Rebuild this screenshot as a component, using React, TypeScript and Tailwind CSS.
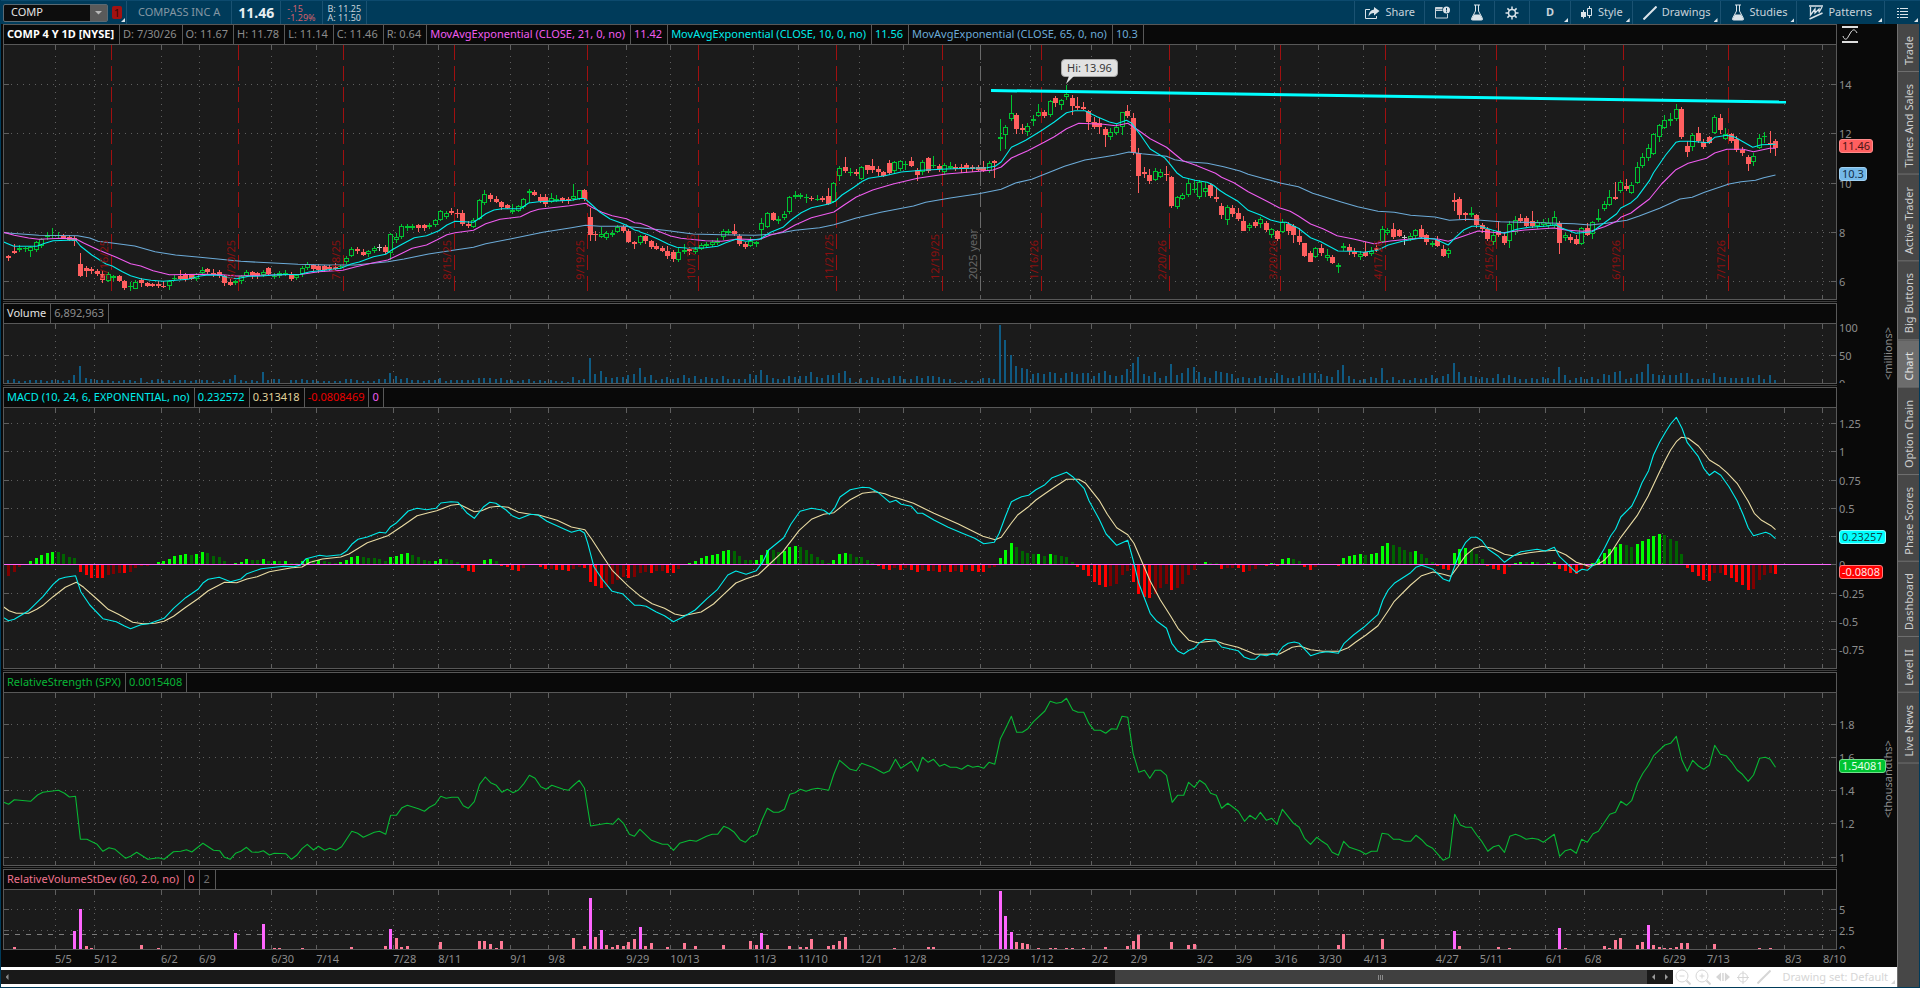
import React from 'react';

// Drawn values are kept in chart units: 2.45 per pixel across and 3 per pixel down,
// split in three pages of 640px each.
const PAGE = 640;
const PLOT_LEFT = 4;
const PLOT_WIDTH = 1832;

const pageX = (x: number, page: number) => x / 2.45 + PAGE * page - PLOT_LEFT;
const barX = (i: number) => Math.floor(8.5 + 5.54 * i) - PLOT_LEFT;
const nums = (s: string) => s.trim().split(/\s+/).map(Number);

const trace = (pages: string[], offset: number) =>
  pages
    .map((page, p) =>
      page
        .trim()
        .split(/\s+/)
        .map((pt) => {
          const [x, y] = pt.split(',').map(Number);
          return `${pageX(x, p).toFixed(1)},${(y / 3 + offset).toFixed(1)}`;
        })
        .join(' ')
    )
    .join(' ');

const candleData = `
r765,767,775,782 r733,754,758,763 g736,745,749,755 g740,744,748,755 g738,742,754,770 g723,725,750,755 g715,718,739,744 g695,706,712,720
g684,704,708,714 g697,704,708,714 r702,707,713,718 r705,711,721,724 r708,714,724,738 r759,792,828,831 r799,805,813,832 r802,808,814,823
r806,813,821,829 r812,823,841,849 g816,822,842,846 g824,829,835,842 r826,828,843,845 r840,844,863,870 g846,857,861,872 g841,847,866,868
r835,840,849,862 r846,849,858,862 r848,853,857,861 r843,853,858,863 r844,857,859,864 g841,843,857,869 g826,833,837,844 r810,829,836,840
r820,824,836,842 r821,823,837,840 g818,822,836,843 g801,809,820,823 r804,807,815,825 r807,820,824,830 r811,817,827,833 r825,828,850,857
r838,845,855,858 g840,842,850,856 g825,829,843,851 g811,815,828,832 r814,817,824,836 r815,820,827,836 g810,816,826,831 r800,803,823,828
g818,827,831,837 g813,820,829,834 g810,818,823,829 r815,823,838,842 g821,824,834,839 g797,803,823,831 g786,791,803,810 r791,795,808,812
r793,798,810,818 r794,797,810,815 r796,800,808,813 r790,801,806,811 g794,798,802,808 g767,774,787,792 g742,748,767,771 r742,746,754,762
r748,755,764,768 g750,754,762,770 g738,745,752,758 w732,742,745,752 r735,742,755,763 g700,702,760,779 g700,711,720,728 g672,679,712,716
g672,678,684,692 g671,678,684,690 r672,675,683,697 r671,676,685,694 g670,675,681,687 g658,661,675,681 g630,633,660,664 g633,640,652,657
r625,633,640,645 r627,638,641,655 r630,640,671,677 r663,671,678,685 g655,660,681,685 g596,600,657,660 g570,582,608,614 r580,585,597,605
r587,597,605,609 r604,606,621,630 r611,616,623,627 g612,629,635,641 g616,619,632,636 g594,598,620,626 g568,574,580,608 r569,577,585,589
r582,590,604,608 r583,592,612,620 g580,594,605,610 g584,597,602,605 r592,595,603,610 r592,597,604,611 g551,589,597,604 g569,571,596,600
r567,570,598,603 r625,651,704,722 r694,701,705,722 g680,703,712,714 g694,700,715,719 g691,699,706,710 g676,680,695,700 r675,682,694,700
r686,694,725,730 r723,727,732,746 g705,708,728,735 r706,708,724,732 r719,724,742,748 r730,737,748,751 r738,744,752,757 r738,752,769,776
r749,755,778,785 g745,757,779,785 g733,751,757,762 r742,746,752,766 g740,748,755,762 g730,736,746,750 g726,732,739,744 g720,727,735,740
g715,724,729,735 g687,693,712,720 g688,693,698,706 r672,692,702,708 r702,708,733,739 r727,732,740,747 g711,724,738,742 g722,727,731,741
g655,670,689,720 g637,640,680,685 r635,640,660,664 g649,656,662,672 g632,641,654,660 g588,591,637,641 g573,586,592,597 g578,586,592,597
g582,590,595,608 r587,593,597,602 g586,597,601,604 r589,595,599,605 r565,588,611,614 g547,549,605,610 g497,505,529,543 r471,502,514,519
g505,516,520,528 r508,515,522,528 g498,501,536,540 r494,495,509,521 r478,497,510,518 r499,507,517,527 r512,516,527,532 r480,489,518,524
g483,486,514,522 g480,483,507,512 g484,492,496,509 r471,484,497,502 r505,511,524,542 g481,485,517,525 r472,474,513,518 g469,494,498,505
r492,498,506,515 g490,495,517,524 g486,497,503,508 r492,500,507,512 r492,500,506,518 r490,496,506,518 r494,500,508,515 r495,500,509,514
r484,500,514,517 g482,488,513,518 r481,483,490,533 g358,412,417,453 g375,382,406,447 g285,340,358,364 r340,345,386,403 r372,384,391,402
g369,378,396,408 g345,358,364,379 g312,337,347,351 r331,336,347,355 g300,302,344,352 r289,294,310,322 g297,301,315,331 g256,282,290,299
r284,294,317,345 r291,318,323,330 r305,320,327,331 r331,334,365,389 r350,365,382,388 r354,369,382,402 r380,388,404,440 g385,396,412,420
g372,380,398,406 g336,337,382,406 r315,333,348,355 r340,355,460,466 r443,460,527,579 r502,517,521,533 r506,526,543,552 g503,513,541,544
g508,515,531,534 r497,521,525,543 r528,531,617,624 g588,591,620,627 g580,586,596,600 g537,549,584,592 g541,567,571,578 g540,545,591,598
g545,565,577,590 r549,556,587,594 r565,591,598,605 r609,618,646,658 g615,622,661,674 r615,624,642,650 r625,640,657,662 r649,663,692,694
g668,674,685,692 r660,666,678,685 g650,657,671,684 r663,669,691,696 g683,687,705,713 r690,692,716,722 g657,665,697,700 r667,672,693,706
r672,677,704,728 r683,708,726,736 r728,729,768,771 r752,758,786,787 g740,745,770,775 r732,745,759,767 g748,765,775,783 r765,770,788,791
g790,795,800,818 g730,738,744,752 r731,740,752,766 r745,757,763,771 g754,763,772,780 r727,757,767,770 g741,752,761,769 r734,744,751,755
g678,688,725,730 g685,689,699,704 r670,687,710,716 r688,691,707,712 w704,711,714,735 g700,708,716,722 g687,690,709,715 r675,688,711,714
r703,706,725,735 g722,729,734,740 r708,720,739,742 r734,746,767,771 g744,751,763,774 r579,599,606,632 r591,597,645,657 r637,640,646,664
g621,639,645,650 r641,645,675,684 r668,674,687,700 r681,687,717,724 g690,705,725,735 r664,694,705,711 r700,708,729,736 g664,672,722,743
g649,660,696,704 r643,655,663,670 r647,654,677,680 r633,663,679,684 g661,667,679,687 g658,667,676,681 g655,668,678,686 g633,651,678,685
r662,669,728,762 g699,706,713,722 r702,711,721,728 r706,718,731,735 g681,685,733,735 r669,684,705,708 g662,665,702,718 g626,655,660,665
g604,612,628,632 g570,591,614,618 r546,591,597,600 g541,547,572,579 r537,558,566,573 g545,556,580,583 g486,502,549,553 g458,471,497,504
g432,445,475,482 g398,401,461,464 g373,376,412,426 g345,361,385,388 g340,356,362,377 g312,328,357,363 r321,327,411,416 r423,438,455,471
g399,406,440,452 r380,399,424,430 r418,425,440,447 r407,411,428,432 g345,352,398,402 r342,353,389,402 g384,402,416,421 r398,402,423,430
r409,417,449,455 r442,449,459,467 r464,472,491,513 g460,469,486,497 g402,414,445,447 g397,408,412,428 r393,428,432,459 r418,424,444,468`;

const ema10 = [
  '9,726 22,733 34,739 90,739 110,730 130,722 185,720 197,738 225,765 260,792 275,798 300,815 320,827 345,836 370,841 400,844 430,841 460,838 490,828 510,825 540,826 560,833 580,836 610,829 640,828 680,824 735,823 760,815 800,810 835,805 860,792 880,786 915,770 945,763 960,750 985,733 1015,713 1045,707 1075,692 1095,675 1115,664 1160,667 1175,655 1190,641 1210,630 1230,626 1275,626 1295,609 1320,605 1400,601 1425,595 1433,596 1448,612 1470,637 1495,657 1520,668 1535,676 1555,690 1567,694',
  '0,696 20,704 45,718 70,733 90,742 120,745 160,743 190,739 210,728 235,718 260,724 295,716 320,697 350,682 370,660 395,638 420,623 465,611 480,602 495,585 525,561 545,544 560,535 600,527 640,516 690,511 750,507 850,503 870,499 885,486 910,442 945,421 985,391 1015,366 1045,338 1065,332 1090,332 1120,350 1150,366 1168,371 1192,361 1205,370 1225,403 1250,447 1285,473 1295,487 1315,518 1330,532 1360,541 1390,547 1405,556 1420,571 1435,583 1465,604 1490,631 1520,645 1545,660 1567,667',
  '0,667 15,667 45,685 75,713 100,725 142,753 180,754 205,757 240,750 265,735 300,724 345,714 380,717 412,735 430,712 450,690 470,679 490,679 520,690 550,700 580,688 610,682 655,678 675,674 690,684 725,700 765,695 795,668 825,641 835,624 860,608 875,592 905,542 915,518 945,465 970,427 980,424 1005,424 1050,428 1065,412 1095,406 1115,412 1158,442 1180,434 1214,433',
];

const ema21 = [
  '9,697 35,706 70,714 95,718 150,715 185,716 205,729 240,749 285,772 320,791 345,798 375,812 415,824 500,823 545,824 580,828 640,826 740,823 780,815 840,811 870,801 915,788 950,780 985,760 1010,745 1045,735 1070,720 1095,704 1115,698 1160,691 1190,671 1225,658 1275,650 1300,635 1320,628 1395,617 1435,610 1450,622 1475,637 1500,647 1535,656 1555,668 1567,670',
  '0,670 20,679 45,694 75,708 100,715 160,722 200,724 240,717 290,719 320,705 350,695 380,675 420,653 475,636 500,615 530,591 570,570 620,552 680,535 750,522 810,516 865,510 885,501 910,474 950,452 990,427 1015,410 1045,386 1075,370 1135,373 1165,377 1195,370 1220,390 1250,416 1290,442 1330,482 1360,495 1410,520 1425,532 1455,548 1490,575 1530,600 1567,624',
  '0,624 25,634 45,648 75,672 105,686 140,707 180,717 230,731 270,723 345,714 390,718 412,724 450,708 485,693 540,699 600,690 670,684 700,690 740,694 765,692 795,680 825,664 835,652 860,639 875,625 905,597 935,552 970,509 1000,490 1045,475 1065,459 1095,448 1135,448 1160,455 1200,445 1214,445',
];

const ema65 = [
  '9,698 95,706 190,707 220,714 240,724 270,728 330,738 380,755 430,765 490,772 590,784 730,793 800,795 870,795 950,785 990,777 1050,762 1110,751 1160,742 1190,731 1250,717 1330,697 1400,683 1435,676 1470,679 1530,679 1567,683',
  '0,683 60,691 130,702 200,704 280,706 330,702 380,691 440,683 475,674 530,654 590,637 670,618 700,607 760,594 830,581 885,568 920,549 960,538 1000,518 1040,499 1090,480 1140,470 1165,465 1198,456 1230,461 1290,469 1310,479 1340,485 1390,490 1430,500 1470,513 1490,523 1530,536 1567,548',
  '0,549 45,560 80,580 110,591 150,606 190,620 240,634 280,637 320,646 380,651 415,661 460,658 540,665 640,668 720,671 760,675 800,670 850,661 880,648 930,625 980,597 1010,592 1040,577 1100,552 1130,545 1165,541 1185,533 1214,525',
];

const macdLine = [
  '9,953 21,962 35,958 70,932 105,890 130,853 145,837 160,832 185,827 198,875 220,915 252,956 285,965 305,978 320,986 345,974 365,971 402,955 425,925 455,893 485,868 498,848 510,838 537,832 565,845 590,837 605,821 640,806 695,799 720,800 735,796 750,776 783,766 800,769 835,764 850,752 862,733 877,718 900,711 930,697 945,699 957,680 970,670 1000,633 1022,625 1045,629 1068,625 1080,609 1105,605 1122,607 1145,640 1162,655 1185,620 1200,607 1215,610 1240,630 1255,647 1272,656 1300,643 1318,645 1340,664 1375,683 1400,697 1420,690 1432,699 1440,730 1455,800 1475,837 1500,874 1525,881 1555,916 1567,916',
  '0,916 15,919 40,936 60,947 82,965 110,948 135,930 165,895 190,868 215,825 235,813 260,823 285,812 300,788 315,750 352,713 370,672 392,634 420,625 450,631 464,643 478,622 490,591 515,569 545,562 562,563 583,577 612,607 627,601 640,613 665,619 680,640 692,640 720,660 755,682 790,700 820,715 842,731 868,727 880,700 895,650 910,605 935,590 952,586 970,569 992,554 1010,533 1045,517 1060,530 1088,565 1100,602 1125,658 1142,702 1168,736 1195,721 1208,780 1222,850 1250,940 1265,962 1290,985 1303,1030 1318,1054 1332,1062 1345,1051 1358,1045 1370,1029 1385,1018 1410,1020 1425,1041 1465,1052 1480,1071 1495,1078 1507,1078 1520,1064 1535,1067 1550,1060 1561,1066 1567,1052',
  '0,1052 7,1040 20,1030 35,1026 47,1030 75,1067 95,1059 115,1055 143,1060 157,1030 180,1005 205,982 240,943 252,900 265,870 280,850 320,818 333,802 347,796 375,808 400,837 415,844 425,808 440,760 455,727 468,712 482,712 495,722 510,748 535,769 550,787 570,769 590,755 630,748 650,753 672,742 685,770 700,787 726,818 740,808 753,811 775,787 795,745 810,708 822,688 835,651 862,618 875,585 887,548 903,512 915,465 930,427 945,395 957,372 971,352 985,385 998,428 1025,470 1038,505 1052,526 1065,514 1080,526 1100,560 1120,602 1135,645 1147,683 1160,707 1190,697 1202,703 1214,716',
];

const signalLine = [
  '9,921 22,932 40,940 70,940 90,928 105,916 130,890 160,862 187,847 205,862 240,900 265,928 290,943 325,967 350,971 380,970 402,964 425,949 455,922 485,896 510,872 550,847 580,848 605,837 630,830 660,815 715,803 740,801 760,787 790,777 835,771 855,762 900,728 950,707 985,679 1022,647 1050,638 1070,632 1105,616 1125,613 1145,625 1162,635 1180,632 1200,622 1220,619 1245,622 1270,637 1300,643 1320,645 1365,661 1400,681 1433,689 1450,718 1475,765 1500,811 1540,859 1567,887',
  '0,888 30,911 60,925 85,942 105,947 150,936 180,912 205,883 235,849 260,836 290,824 315,795 350,755 390,691 420,658 450,643 475,638 500,613 515,599 545,580 575,575 600,581 615,589 640,598 670,610 720,640 780,672 840,709 870,719 885,712 910,669 925,645 950,622 970,600 990,583 1015,562 1045,538 1075,538 1092,550 1125,601 1145,643 1168,683 1195,704 1210,730 1235,800 1250,843 1275,900 1300,948 1318,985 1345,1021 1365,1028 1410,1022 1430,1031 1465,1042 1507,1063 1567,1062',
  '0,1061 30,1042 48,1038 75,1049 105,1054 145,1054 167,1043 185,1027 210,1006 240,977 265,932 280,904 320,855 347,827 375,816 400,823 418,829 435,801 455,766 475,745 495,739 520,745 550,763 570,767 610,758 640,754 675,751 700,764 726,787 757,799 780,792 795,780 810,760 835,712 875,647 902,588 930,515 945,478 957,450 971,425 983,412 1000,415 1025,438 1052,480 1075,497 1095,518 1120,550 1147,604 1162,640 1180,661 1203,677 1214,689',
];

const macdDiff = nums(`
-32 -20 -7 0 10 19 28 34 37 36 31 22 19 -20 -31 -38 -39 -40 -31 -26 -23 -24 -20 -10 -3 -2 0 7 10 16 25 28
31 28 31 35 34 25 22 10 1 4 7 16 13 12 16 10 10 9 10 3 2 10 16 11 13 8 7 4 7 13 22 25
22 19 18 16 10 22 23 31 32 28 22 13 9 10 16 15 13 7 -8 -19 -20 0 13 14 9 -2 -7 -16 -17 -9 -1 0
-7 -13 -12 -14 -16 -19 -12 -7 -10 -50 -64 -70 -67 -58 -44 -36 -38 -36 -25 -22 -23 -19 -18 -23 -24 -13 -1 4 10 19 25 28
31 40 43 40 25 13 12 13 28 43 42 36 40 52 55 52 43 31 22 13 3 13 31 34 31 22 21 13 4 -4 -13 -16
-10 -14 -10 -14 -22 -16 -19 -18 -20 -18 -20 -18 -20 -16 -19 -20 -21 -10 -7 19 43 64 52 40 34 30 31 25 31 28 25 22
7 -7 -16 -34 -52 -61 -67 -64 -56 -31 -19 -52 -86 -97 -100 -88 -70 -58 -76 -70 -56 -31 -16 0 7 3 2 -13 -10 -9 -10 -22
-19 -13 -1 -2 4 -3 16 19 16 10 -7 -16 -7 -1 0 -1 -2 19 25 28 29 28 31 34 55 64 58 52 43 37 38 31
19 7 -2 -13 -14 34 46 49 46 31 16 -4 -13 -16 -26 -7 4 7 6 7 6 0 4 7 -13 -19 -25 -28 -16 -13 4 16
34 46 50 61 58 52 61 70 76 85 91 88 76 70 31 -10 -22 -34 -46 -49 -25 -24 -31 -40 -52 -61 -76 -73 -46 -31 -25 -26`);

const volume = nums(`
9 12 6 6 9 9 9 6 9 9 6 9 24 51 15 12 9 9 9 6 6 9 9 6 15 3 9 12 6 9 6 9
9 6 9 9 9 6 3 9 12 24 9 6 9 6 33 9 12 12 0 9 9 12 9 9 6 6 6 6 6 12 12 9
6 6 6 12 12 30 21 12 15 9 9 6 9 9 15 6 9 9 9 9 9 15 15 15 12 15 9 9 6 9 12 6
9 6 9 6 6 3 18 9 12 75 27 36 18 15 18 18 24 27 45 18 24 9 12 18 12 15 24 15 21 12 18 15
12 21 12 12 12 12 27 24 39 24 15 12 12 21 18 21 21 33 18 15 24 24 30 36 15 3 15 9 18 15 9 15
21 21 12 12 21 15 21 21 18 12 12 3 3 9 6 6 15 15 12 174 129 84 51 45 42 27 30 27 33 30 15 30
33 27 30 30 21 30 36 24 21 24 42 60 78 27 21 33 15 21 57 24 30 45 48 33 18 15 36 33 30 27 15 18
15 15 21 15 15 30 24 15 15 21 30 30 30 27 21 18 39 54 21 12 9 12 18 15 45 9 18 9 12 9 15 12
15 24 15 21 27 60 33 18 21 18 18 15 15 27 15 24 18 12 12 15 12 18 15 12 48 24 9 15 18 12 18 12
27 24 33 36 12 15 27 33 57 27 24 24 24 24 30 30 12 12 15 12 30 18 18 15 15 15 18 15 24 12 24 9`);

const strengthLine = [
  '9,427 21,433 35,419 75,424 92,405 105,397 143,391 158,400 170,411 185,409 197,538 213,538 238,553 252,574 267,563 282,568 308,595 320,589 335,577 362,598 388,593 402,598 425,575 443,574 457,569 470,576 497,550 523,571 538,572 550,592 564,598 577,580 590,574 604,562 617,576 633,577 645,572 660,585 672,580 700,581 714,598 727,586 740,566 753,553 768,570 780,559 795,571 808,565 823,571 837,560 862,514 876,520 890,532 917,517 930,514 945,523 957,466 971,466 985,443 998,436 1025,446 1040,454 1052,442 1066,433 1080,409 1093,415 1107,412 1122,412 1135,437 1147,445 1162,425 1175,373 1189,351 1202,368 1216,376 1230,397 1243,388 1257,398 1270,390 1284,370 1297,346 1311,355 1325,380 1338,388 1352,376 1380,388 1392,391 1406,375 1419,361 1432,385 1447,498 1487,490 1501,493 1515,475 1528,491 1542,523 1554,529 1567,509',
  '0,508 28,541 55,553 68,553 82,571 97,550 122,541 138,544 163,529 177,523 190,523 205,499 217,505 231,517 245,539 258,547 272,530 286,523 299,480 312,445 327,457 340,457 354,448 367,403 380,398 393,388 407,394 421,388 435,385 462,391 475,342 489,301 515,328 530,332 543,310 570,322 597,340 611,332 626,298 639,325 665,304 680,334 692,292 706,307 719,298 734,319 746,313 760,322 775,322 788,328 803,316 815,322 828,319 842,325 855,307 869,313 883,236 896,205 910,169 923,217 937,217 950,206 964,185 992,153 1005,124 1020,130 1033,127 1045,115 1060,150 1073,157 1087,157 1100,191 1113,211 1128,211 1141,220 1155,206 1168,208 1181,169 1195,172 1208,280 1222,337 1236,331 1249,355 1262,331 1276,331 1290,346 1304,427 1317,406 1332,406 1344,367 1358,382 1371,361 1385,373 1398,400 1412,406 1425,445 1440,430 1466,454 1481,484 1494,466 1508,478 1520,457 1535,481 1548,475 1561,493 1567,468',
  '0,468 6,448 20,470 33,490 47,502 60,535 75,553 90,532 102,543 116,554 128,577 143,586 156,544 170,562 197,573 210,583 224,574 238,574 250,520 265,523 278,538 292,538 305,544 320,544 333,526 347,539 360,556 374,565 400,601 415,592 428,463 442,495 455,502 469,502 482,525 495,545 509,574 523,560 536,556 550,577 563,529 577,523 590,529 603,538 618,535 632,538 645,547 672,523 685,589 699,572 712,568 726,580 739,538 753,547 767,521 780,514 808,463 822,457 835,424 849,436 862,421 876,370 889,340 903,316 916,286 943,255 957,250 971,229 985,301 998,334 1011,301 1025,318 1038,328 1052,316 1065,256 1079,283 1093,287 1107,307 1120,330 1133,343 1147,364 1160,345 1175,295 1189,292 1201,298 1214,322',
];

// bar index, height
const relVolume = `
1,5 12,54 13,120 14,9 15,3 24,12 27,3 41,48 46,75 48,3 49,3 53,3 62,6 68,9 69,60 70,33 71,6 72,9 78,21 85,24 86,24 87,15 88,3 89,24
102,33 104,9 105,153 106,36 107,57 108,12 109,6 110,12 111,9 112,21 113,30 114,66 115,9 116,18 119,6 122,18 124,9 129,12 134,24 135,12
136,48 137,12 141,9 143,6 144,6 145,30 148,9 149,12 150,24 151,36 160,3 166,6 167,6 179,174 180,99 181,51 182,21 183,18 184,15 186,3
188,3 189,3 191,3 192,3 194,3 198,6 202,9 203,24 204,42 210,21 213,12 214,15 240,12 241,45 248,30 261,54 262,9 269,6 271,3 280,63 281,3
288,9 289,3 290,27 291,33 294,12 295,21 296,72 297,12 298,6 299,3 300,3 301,6 302,18 303,18 308,15 316,3 318,3`
  .trim()
  .split(/\s+/)
  .map((s) => s.split(',').map(Number));

const dates: [string, number][] = [
  ['5/5', 55], ['5/12', 94], ['6/2', 161], ['6/9', 199], ['6/30', 271], ['7/14', 316], ['7/28', 393], ['8/11', 438],
  ['9/1', 510], ['9/8', 548], ['9/29', 626], ['10/13', 670], ['11/3', 753], ['11/10', 798], ['12/1', 859], ['12/8', 903],
  ['12/29', 980], ['1/12', 1030], ['2/2', 1091], ['2/9', 1130], ['3/2', 1196], ['3/9', 1235], ['3/16', 1274], ['3/30', 1318],
  ['4/13', 1363], ['4/27', 1435], ['5/11', 1479], ['6/1', 1545], ['6/8', 1584], ['6/29', 1662], ['7/13', 1706], ['8/3', 1784],
  ['8/10', 1822],
];

const expirations: [string, number][] = [
  ['5/16/25', 111], ['6/20/25', 238], ['7/18/25', 343], ['8/15/25', 454], ['9/19/25', 587], ['10/17/25', 698],
  ['11/21/25', 836], ['12/19/25', 942], ['1/16/26', 1041], ['2/20/26', 1169], ['3/20/26', 1280], ['4/17/26', 1385],
  ['5/15/26', 1496], ['6/19/26', 1623], ['7/17/26', 1728],
];
const YEAR_X = 980;

const pct = (v: number, total: number) => `${(v / total) * 100}%`;

interface Cell {
  text: string;
  className: string;
}

interface AxisLabel {
  text: string;
  y: number;
}

interface AxisBadge extends AxisLabel {
  className: string;
}

interface PanelProps {
  cells: Cell[];
  cellPadding?: string;
  height: number;
  grid: number[];
  labels: AxisLabel[];
  badges?: AxisBadge[];
  unit?: string;
  corner?: React.ReactNode;
  overlay?: React.ReactNode;
  last?: boolean;
  children: React.ReactNode;
}

const Grid: React.FC<{ height: number; grid: number[] }> = ({ height, grid }) => (
  <g stroke="#5f5f5f" shapeRendering="crispEdges">
    {dates.map(([name, x]) => (
      <g key={name}>
        <path d={`M${x - 3.5} 11V${height - 7}`} strokeDasharray="1 5" />
        <path d={`M${x - 3.5} 0V5M${x - 3.5} ${height - 4}V${height}`} />
      </g>
    ))}
    {grid.map((y) => (
      <g key={y}>
        <path d={`M7 ${y + 0.5}H${PLOT_WIDTH - 6}`} strokeDasharray="1 5" />
        <path d={`M0 ${y + 0.5}H5M${PLOT_WIDTH - 5} ${y + 0.5}H${PLOT_WIDTH}`} />
      </g>
    ))}
  </g>
);

const Panel: React.FC<PanelProps> = ({
  cells,
  cellPadding = 'pl-[3px] pr-1',
  height,
  grid,
  labels,
  badges = [],
  unit,
  corner,
  overlay,
  last,
  children,
}) => (
  <section className="flex min-h-0">
    <div className="flex min-w-0 flex-1 flex-col">
      <div className="flex min-h-0 flex-1 flex-col border border-[#585858]">
        <header className="flex h-5 shrink-0 overflow-hidden whitespace-nowrap border-b border-[#585858] bg-[#090909]">
          {cells.map((cell) => (
            <span
              key={cell.text}
              className={`border-r border-[#585858] leading-[18px] ${cellPadding} ${cell.className}`}
            >
              {cell.text}
            </span>
          ))}
        </header>
        <div className="relative min-h-0 flex-1 overflow-hidden bg-[#1b1b1b]">
          <svg
            className="absolute inset-0 h-full w-full"
            viewBox={`0 0 ${PLOT_WIDTH} ${height}`}
            preserveAspectRatio="none"
            aria-hidden="true"
          >
            <Grid height={height} grid={grid} />
            {children}
          </svg>
          {overlay}
        </div>
      </div>
      {!last && <div className="my-px h-px shrink-0 bg-[#3c3c3c]" />}
    </div>
    <aside className={`relative flex w-[60px] shrink-0 flex-col pt-[21px] ${last ? 'pb-px' : 'pb-1'}`}>
      {corner}
      <div className="relative min-h-0 flex-1 overflow-hidden text-[#8c8c8c]">
        {labels.map((label) => (
          <span
            key={label.text}
            className="absolute left-[2px] -translate-y-1/2 leading-4"
            style={{ top: pct(label.y + 1, height) }}
          >
            {label.text}
          </span>
        ))}
        {unit && (
          <span className="absolute right-px top-0 flex h-full w-4 rotate-180 items-center justify-center leading-4 [writing-mode:vertical-rl]">
            {unit}
          </span>
        )}
        {badges.map((badge) => (
          <span
            key={badge.text}
            className={`absolute left-[2px] -translate-y-1/2 rounded-[3px] border px-[2px] leading-3 ${badge.className}`}
            style={{ top: pct(badge.y, height) }}
          >
            {badge.text}
          </span>
        ))}
      </div>
    </aside>
  </section>
);

const Candles: React.FC = () => (
  <g shapeRendering="crispEdges">
    {candleData
      .trim()
      .split(/\s+/)
      .map((entry, i) => {
        const kind = entry[0];
        const [high, top, bottom, low] = entry.slice(1).split(',').map((v) => Math.round(Number(v) / 3) - 45);
        const x = barX(i);
        const h = Math.max(bottom - top, 1);
        const color = kind === 'g' ? '#00c432' : kind === 'r' ? '#ff5f5f' : '#c8c8c8';
        return (
          <g key={i}>
            <rect x={x} y={high} width={1} height={Math.max(low - high, 1)} fill={color} />
            {kind === 'g' && h > 2 ? (
              <rect x={x - 1.5} y={top + 0.5} width={4} height={h - 1} fill="#1b1b1b" stroke={color} />
            ) : (
              <rect x={x - 2} y={top} width={5} height={h} fill={color} />
            )}
          </g>
        );
      })}
  </g>
);

const Line: React.FC<{ pages: string[]; offset: number; color: string }> = ({ pages, offset, color }) => (
  <polyline points={trace(pages, offset)} fill="none" stroke={color} strokeWidth={1.1} strokeLinejoin="round" />
);

const histColor = (v: number, prev: number) => {
  if (v >= 0) return v >= prev ? '#00ff00' : '#006400';
  return v < prev ? '#ff0000' : '#7f0000';
};

const Corner = () => (
  <svg className="absolute left-[5px] top-[2px]" width="16" height="17" viewBox="0 0 16 17" fill="none" aria-hidden="true">
    <path d="M0 1h16M0 16h16" stroke="#ddd" strokeWidth="2" />
    <path d="M1 10c1 4 4 4 5 1l3-5c2-3 4-3 6 1" stroke="#ddd" />
  </svg>
);

const ShareIcon = () => (
  <svg width="15" height="14" viewBox="0 0 15 14" fill="none" aria-hidden="true">
    <path d="M5 3.500H.500v9h11V10" stroke="#dbe4ea" />
    <path d="M9 1l5.500 4L9 9.500V7C6.500 7 5 8 3.500 10.500 3.700 6.500 5.500 4 9 3.500z" fill="#dbe4ea" />
  </svg>
);

const WindowAlertIcon = () => (
  <svg width="15" height="13" viewBox="0 0 15 13" fill="none" aria-hidden="true">
    <path d="M7.500 1.500H.500v10.500h12V8M.500 4.500h7" stroke="#c8d3da" />
    <path d="M.500 1.500h7v2h-7z" fill="#c8d3da" />
    <circle cx="11.500" cy="4" r="3.500" fill="#dbe4ea" />
    <path d="M11.500 2v2.500M11.500 5.200v1" stroke="#003b5a" />
  </svg>
);

const FlaskIcon = () => (
  <svg width="14" height="17" viewBox="0 0 14 17" fill="none" aria-hidden="true">
    <path d="M4 1h6M5.500 1v6L1.500 14.500q-.5 1.500 1 1.500h9q1.500 0 1-1.500L8.500 7V1" stroke="#dbe4ea" />
    <path d="M4 10.500h6l2.500 4.500-1 1h-9l-1-1z" fill="#dbe4ea" />
  </svg>
);

const GearIcon = () => (
  <svg width="14" height="14" viewBox="0 0 14 14" fill="none" aria-hidden="true">
    <circle cx="7" cy="7" r="3.500" stroke="#dbe4ea" strokeWidth="1.500" />
    <path d="M7 .500v3M7 10.500v3M.500 7h3M10.500 7h3M2.400 2.400l2 2M9.600 9.600l2 2M2.400 11.600l2-2M9.600 4.400l2-2" stroke="#dbe4ea" strokeWidth="1.500" />
  </svg>
);

const CandleIcon = () => (
  <svg width="12" height="13" viewBox="0 0 12 13" fill="none" aria-hidden="true">
    <path d="M2.500 4v8.500M8.500 0v2.500M8.500 9.500V12" stroke="#dbe4ea" />
    <path d="M0 6h5v5H0z" fill="#dbe4ea" />
    <path d="M6.500 2.500h4v7h-4z" stroke="#dbe4ea" />
  </svg>
);

const SlashIcon = ({ color = '#dbe4ea' }) => (
  <svg width="14" height="14" viewBox="0 0 14 14" aria-hidden="true">
    <path d="M.500 13.500l13-13" stroke={color} strokeWidth="2" />
  </svg>
);

const PatternIcon = () => (
  <svg width="14" height="15" viewBox="0 0 14 15" fill="none" aria-hidden="true">
    <path d="M0 1h14M.500 14L13.500 8" stroke="#dbe4ea" strokeWidth="1.500" />
    <path d="M1.500 2v8L6 4v4l4-4v3.500l3-5.500" stroke="#dbe4ea" strokeWidth="1.300" />
  </svg>
);

const MenuIcon = () => (
  <svg width="11" height="12" viewBox="0 0 11 12" stroke="#dbe4ea" aria-hidden="true">
    <path d="M0 1.500h2M3 1.500h8M0 4.500h2M3 4.500h8M0 7.500h2M3 7.500h8M0 10.500h2M3 10.500h8" />
  </svg>
);

interface ToolButtonProps {
  label: string;
  icon?: React.ReactNode;
  text?: string;
  menu?: boolean;
  className?: string;
}

const ToolButton: React.FC<ToolButtonProps> = ({ label, icon, text, menu, className = 'pl-[10px] pr-[9px]' }) => (
  <button
    type="button"
    aria-label={label}
    className={`relative flex h-full items-center justify-center gap-[5px] border-l border-[#1a5272] ${className}`}
  >
    {icon}
    {text && <span>{text}</span>}
    {menu && (
      <span className="absolute bottom-[2px] right-[2px] h-1 w-1 bg-[#dbe4ea] [clip-path:polygon(100%_0,100%_100%,0_100%)]" />
    )}
  </button>
);

const Toolbar = () => (
  <div className="flex h-6 shrink-0 items-center border-t border-[#0c4a6e] bg-[#003b5a] text-[#c8d3da]">
    <div className="ml-[2px] flex h-[18px] w-[105px] rounded-[2px] border border-[#5a6a74] bg-[#0d0d0d]">
      <input
        aria-label="Symbol"
        defaultValue="COMP"
        className="w-0 flex-1 bg-transparent pl-[7px] text-[11px] text-[#e4e4e4] outline-none"
      />
      <button type="button" aria-label="Symbol list" className="flex w-[17px] items-center justify-center bg-[#5a5a5a]">
        <span className="h-1 w-2 bg-[#b8b8b8] [clip-path:polygon(0_0,100%_0,50%_100%)]" />
      </button>
    </div>
    <button type="button" className="relative ml-1 mr-px flex h-full w-[13px] items-center">
      <span className="h-[13px] w-[10px] rounded-[2px] bg-[#a31212] text-center leading-[13px] text-[#3a0808]">1</span>
      <span className="absolute bottom-[2px] right-0 h-1 w-1 bg-[#dbe4ea] [clip-path:polygon(100%_0,100%_100%,0_100%)]" />
    </button>
    <div className="flex h-full items-center border-l border-r border-[#1a5272] px-[11px] text-[#8497a3]">COMPASS INC A</div>
    <div className="flex h-full items-center border-r border-[#1a5272] px-[6px] text-sm font-bold text-[#e6edf1]">11.46</div>
    <div className="flex h-full flex-col justify-center border-r border-[#1a5272] px-[6px] text-[9px] leading-[9px] text-[#d4616b]">
      <span>-.15</span>
      <span>-1.29%</span>
    </div>
    <div className="flex h-full flex-col justify-center border-r border-[#1a5272] px-[5px] text-[9px] leading-[9px]">
      <span>B: 11.25</span>
      <span>A: 11.50</span>
    </div>
    <div className="ml-auto flex h-full">
      <ToolButton label="Share" icon={<ShareIcon />} text="Share" />
      <ToolButton label="Alerts" icon={<WindowAlertIcon />} className="w-[35px]" />
      <ToolButton label="Studies" icon={<FlaskIcon />} className="w-[35px]" />
      <ToolButton label="Settings" icon={<GearIcon />} className="w-[35px]" />
      <ToolButton label="Aggregation" text="D" menu className="w-[41px] font-bold" />
      <ToolButton label="Style" icon={<CandleIcon />} text="Style" menu />
      <ToolButton label="Drawings" icon={<SlashIcon />} text="Drawings" menu />
      <ToolButton label="Edit studies" icon={<FlaskIcon />} text="Studies" menu />
      <ToolButton label="Patterns" icon={<PatternIcon />} text="Patterns" menu className="px-3" />
      <ToolButton label="Menu" icon={<MenuIcon />} menu className="w-9" />
    </div>
  </div>
);

const tabs = [
  'Trade', 'Times And Sales', 'Active Trader', 'Big Buttons', 'Chart', 'Option Chain', 'Phase Scores', 'Dashboard',
  'Level II', 'Live News',
];

const SideTabs = () => (
  <nav className="flex w-[22px] shrink-0 flex-col border-l border-[#707070] bg-[#474747] text-[#cfcfcf]">
    {tabs.map((tab) => (
      <button
        key={tab}
        type="button"
        className={`flex rotate-180 items-center border-t border-[#707070] pb-3 pt-[6px] leading-5 [writing-mode:vertical-rl] ${
          tab === 'Chart' ? 'bg-[#6c6c6c] text-[#e4e4e4]' : ''
        }`}
      >
        {tab}
      </button>
    ))}
  </nav>
);

const priceCells: Cell[] = [
  { text: 'COMP 4 Y 1D [NYSE]', className: 'font-bold text-white' },
  { text: 'D: 7/30/26', className: 'text-[#8c8c8c]' },
  { text: 'O: 11.67', className: 'text-[#8c8c8c]' },
  { text: 'H: 11.78', className: 'text-[#8c8c8c]' },
  { text: 'L: 11.14', className: 'text-[#8c8c8c]' },
  { text: 'C: 11.46', className: 'text-[#8c8c8c]' },
  { text: 'R: 0.64', className: 'text-[#8c8c8c]' },
  { text: 'MovAvgExponential (CLOSE, 21, 0, no)', className: 'text-[#f05cf0]' },
  { text: '11.42', className: 'text-[#f05cf0]' },
  { text: 'MovAvgExponential (CLOSE, 10, 0, no)', className: 'text-[#00ecec]' },
  { text: '11.56', className: 'text-[#00ecec]' },
  { text: 'MovAvgExponential (CLOSE, 65, 0, no)', className: 'text-[#6cabd8]' },
  { text: '10.3', className: 'text-[#6cabd8]' },
];

const ChartNotes = () => (
  <>
    {expirations.map(([name, x]) => (
      <span
        key={name}
        className="absolute bottom-[19px] -ml-[14px] rotate-180 leading-[14px] text-[#8a1010] [writing-mode:vertical-rl]"
        style={{ left: pct(x - PLOT_LEFT, PLOT_WIDTH) }}
      >
        {name}
      </span>
    ))}
    <span
      className="absolute bottom-[19px] -ml-[14px] rotate-180 leading-[14px] text-[#666] [writing-mode:vertical-rl]"
      style={{ left: pct(YEAR_X - PLOT_LEFT, PLOT_WIDTH) }}
    >
      2025 year
    </span>
    <div className="absolute top-[14px]" style={{ left: pct(1061 - PLOT_LEFT, PLOT_WIDTH) }}>
      <div className="rounded-[4px] border border-[#a8a8a8] bg-[#e2e2e2] px-[5px] leading-4 text-[#383838]">Hi: 13.96</div>
      <svg className="absolute left-1 top-[17px]" width="10" height="9" viewBox="0 0 10 9" aria-hidden="true">
        <path d="M4 0h5L1 8z" fill="#e2e2e2" />
      </svg>
    </div>
  </>
);

const Footer = () => (
  <div className="flex h-5 shrink-0 bg-white text-[#d6d6d6]">
    <div className="my-[3px] flex flex-1 bg-[#191919]">
      <button type="button" aria-label="Scroll to start" className="flex w-3 items-center justify-center">
        <span className="h-[6px] w-[3px] bg-[#8a8a8a] [clip-path:polygon(100%_0,100%_100%,0_50%)]" />
      </button>
      <div className="grow-[1103]" />
      <div className="flex grow-[528] items-center justify-center gap-px bg-[#404040]">
        <span className="h-[5px] w-px bg-[#8a8a8a]" />
        <span className="h-[5px] w-px bg-[#8a8a8a]" />
        <span className="h-[5px] w-px bg-[#8a8a8a]" />
      </div>
      <button type="button" aria-label="Scroll left" className="flex w-[13px] items-center justify-center">
        <span className="h-[6px] w-[3px] bg-[#9a9a9a] [clip-path:polygon(100%_0,100%_100%,0_50%)]" />
      </button>
      <button type="button" aria-label="Scroll right" className="flex w-[13px] items-center justify-center">
        <span className="h-[6px] w-[3px] bg-[#9a9a9a] [clip-path:polygon(0_0,0_100%,100%_50%)]" />
      </button>
    </div>
    <div className="relative flex w-[224px] items-center gap-1 pl-[2px]">
      <button type="button" aria-label="Zoom out">
        <svg width="16" height="16" viewBox="0 0 16 16" fill="none" stroke="#d6d6d6" aria-hidden="true">
          <circle cx="7" cy="7" r="6" />
          <path d="M4.500 7h5" />
          <path d="M11.500 11.500l4 4" strokeWidth="2" />
        </svg>
      </button>
      <button type="button" aria-label="Zoom in">
        <svg width="16" height="16" viewBox="0 0 16 16" fill="none" stroke="#d6d6d6" aria-hidden="true">
          <circle cx="7" cy="7" r="6" />
          <path d="M4.500 7h5M7 4.500v5" />
          <path d="M11.500 11.500l4 4" strokeWidth="2" />
        </svg>
      </button>
      <button type="button" aria-label="Fit width">
        <svg width="16" height="16" viewBox="0 0 16 16" fill="#d6d6d6" aria-hidden="true">
          <path d="M6 3.500v9L1 8zM10 3.500v9L15 8zM7 4h.800v8H7zM8.300 4h.800v8h-.8z" />
        </svg>
      </button>
      <button type="button" aria-label="Crosshair">
        <svg width="16" height="16" viewBox="0 0 16 16" fill="none" stroke="#d6d6d6" aria-hidden="true">
          <circle cx="8" cy="8.500" r="4.500" />
          <path d="M8 2v13M2 8.500h12" />
        </svg>
      </button>
      <button type="button" aria-label="Draw line" className="pl-[2px]">
        <SlashIcon color="#d6d6d6" />
      </button>
      <button type="button" className="ml-auto whitespace-nowrap pr-[9px] leading-4">
        Drawing set: Default
      </button>
      <span className="absolute bottom-[3px] right-[2px] h-1 w-1 bg-[#d6d6d6] [clip-path:polygon(100%_0,100%_100%,0_100%)]" />
    </div>
  </div>
);

export default function App() {
  return (
    <div className="flex h-screen min-h-[640px] flex-col overflow-hidden border-b border-l border-[#003b5a] bg-[#090909] font-['Noto_Sans','Open_Sans',sans-serif] text-[11px]">
      <Toolbar />
      <div className="flex min-h-0 flex-1 border-r border-[#003b5a]">
        <div className="flex min-w-0 flex-1 flex-col">
          <main className="grid min-h-0 flex-1 grid-rows-[279fr_84fr_285fr_197fr_81fr] pl-[2px]">
            <Panel
              cells={priceCells}
              cellPadding="pl-[3px] pr-[5px]"
              height={254}
              grid={[39, 88, 138, 187, 236]}
              labels={[
                { text: '14', y: 39 },
                { text: '12', y: 88 },
                { text: '10', y: 138 },
                { text: '8', y: 187 },
                { text: '6', y: 236 },
              ]}
              badges={[
                { text: '11.46', y: 101, className: 'border-[#ff8a8a] bg-[#ff5f5f] text-[#4a1515]' },
                { text: '10.3', y: 129, className: 'border-[#9fd0f2] bg-[#74b9e8] text-[#123048]' },
              ]}
              corner={<Corner />}
              overlay={<ChartNotes />}
            >
              <g shapeRendering="crispEdges">
                {expirations.map(([name, x]) => (
                  <path key={name} d={`M${x - 3.5} 0V248`} stroke="#a01010" strokeDasharray="15 6" />
                ))}
                <path d={`M${YEAR_X - 3.5} 0V248`} stroke="#6a6a6a" strokeDasharray="15 6" />
              </g>
              <Candles />
              <Line pages={ema65} offset={-45} color="#6cabd8" />
              <Line pages={ema21} offset={-45} color="#f05cf0" />
              <Line pages={ema10} offset={-45} color="#00ecec" />
              <path d="M987 45.500L1782 57" stroke="#00ffff" strokeWidth="3" />
            </Panel>

            <Panel
              cells={[
                { text: 'Volume', className: 'text-[#e4e4e4]' },
                { text: '6,892,963', className: 'text-[#8c8c8c]' },
              ]}
              height={59}
              grid={[31]}
              labels={[
                { text: '100', y: 3 },
                { text: '50', y: 31 },
                { text: '0', y: 59 },
              ]}
              unit="<millions>"
            >
              <g fill="#0f5a82" shapeRendering="crispEdges">
                {volume.map((v, i) => (
                  <rect key={i} x={barX(i) - 1} y={59 - Math.round(v / 3)} width={2} height={Math.round(v / 3)} />
                ))}
              </g>
            </Panel>

            <Panel
              cells={[
                { text: 'MACD (10, 24, 6, EXPONENTIAL, no)', className: 'text-[#00ecec]' },
                { text: '0.232572', className: 'text-[#00ecec]' },
                { text: '0.313418', className: 'text-[#e0d29a]' },
                { text: '-0.0808469', className: 'text-[#e80000]' },
                { text: '0', className: 'text-[#f05cf0]' },
              ]}
              height={260}
              grid={[15, 43, 72, 100, 128, 156, 185, 213, 241]}
              labels={[
                { text: '1.25', y: 15 },
                { text: '1', y: 43 },
                { text: '0.75', y: 72 },
                { text: '0.5', y: 100 },
                { text: '0', y: 156 },
                { text: '-0.25', y: 185 },
                { text: '-0.5', y: 213 },
                { text: '-0.75', y: 241 },
              ]}
              badges={[
                { text: '0.23257', y: 129, className: 'border-[#8affff] bg-[#00ffff] text-[#104848]' },
                { text: '-0.0808', y: 164, className: 'border-[#ff7a7a] bg-[#ff0000] text-[#ffe4e4]' },
              ]}
            >
              <g shapeRendering="crispEdges">
                {macdDiff.map((v, i) => {
                  const h = Math.round(Math.abs(v) / 3);
                  return (
                    <rect
                      key={i}
                      x={barX(i) - 1}
                      y={v >= 0 ? 156 - h : 157}
                      width={3}
                      height={h}
                      fill={histColor(v, i > 0 ? macdDiff[i - 1] : -40)}
                    />
                  );
                })}
                <path d="M0 156.500H1827" stroke="#ff66ff" />
              </g>
              <Line pages={signalLine} offset={-108} color="#eadca4" />
              <Line pages={macdLine} offset={-108} color="#00ecec" />
            </Panel>

            <Panel
              cells={[
                { text: 'RelativeStrength (SPX)', className: 'text-[#0ab436]' },
                { text: '0.0015408', className: 'text-[#0ab436]' },
              ]}
              height={172}
              grid={[31, 64, 97, 130, 164]}
              labels={[
                { text: '1.8', y: 31 },
                { text: '1.6', y: 64 },
                { text: '1.4', y: 97 },
                { text: '1.2', y: 130 },
                { text: '1', y: 164 },
              ]}
              badges={[{ text: '1.54081', y: 73, className: 'border-[#6fe08a] bg-[#00c432] text-[#e4ffe9]' }]}
              unit="<thousandths>"
            >
              <Line pages={strengthLine} offset={-33} color="#08b834" />
            </Panel>

            <Panel
              cells={[
                { text: 'RelativeVolumeStDev (60, 2.0, no)', className: 'text-[#f0748f]' },
                { text: '0', className: 'text-[#f0748f]' },
                { text: '2', className: 'text-[#6e6e6e]' },
              ]}
              cellPadding="pl-[3px] pr-[5px]"
              height={59}
              grid={[19, 40]}
              labels={[
                { text: '5', y: 19 },
                { text: '2.5', y: 40 },
                { text: '0', y: 59 },
              ]}
              last
            >
              <g shapeRendering="crispEdges">
                <path d="M0 44.500H1827" stroke="#7c7c7c" strokeDasharray="5 6" />
                {relVolume.map(([i, v]) => {
                  const h = Math.round(v / 3);
                  return (
                    <rect key={i} x={barX(i) - 1} y={59 - h} width={3} height={h} fill={v > 45 ? '#ff66ff' : '#ff7a96'} />
                  );
                })}
              </g>
            </Panel>
          </main>
          <div className="relative ml-[3px] mr-[60px] h-[17px] shrink-0 text-[#8c8c8c]">
            {dates.map(([name, x]) => (
              <span
                key={name}
                className="absolute top-px leading-4"
                style={{ left: pct(x - PLOT_LEFT, PLOT_WIDTH) }}
              >
                {name}
              </span>
            ))}
          </div>
          <Footer />
        </div>
        <SideTabs />
      </div>
    </div>
  );
}
